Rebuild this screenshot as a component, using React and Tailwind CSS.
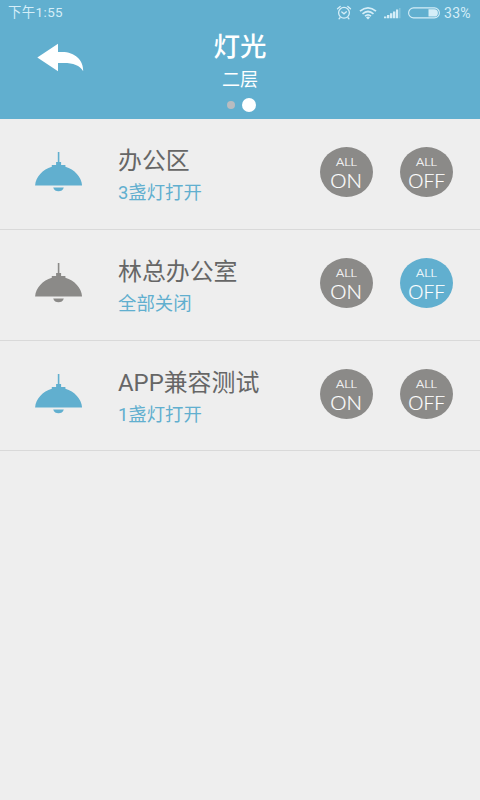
import React from "react";

const rooms = [
  { name: "办公区", status: "3盏灯打开", lit: true, off: false },
  { name: "林总办公室", status: "全部关闭", lit: false, off: true },
  { name: "APP兼容测试", status: "1盏灯打开", lit: true, off: false },
];

const StatusBar = () => (
  <div className="flex h-[26px] items-center justify-between pl-[8px] pr-[7px] text-[#d5eef8]">
    <span className="text-[13.4px] leading-[26px] tracking-[0.4px]">下午1:55</span>
    <div className="flex items-center">
      <svg width="16" height="16" viewBox="0 0 16 16" fill="none" stroke="currentColor" strokeWidth="1.3" strokeLinecap="round">
        <circle cx="8" cy="7.8" r="5.4" />
        <path d="M1.5 3.8 4.2 1.4M14.5 3.8 11.8 1.4M5.8 7 8 8.8 10.4 6.8M4 12.8 3.1 13.8M12 12.8 12.9 13.8" />
      </svg>
      <svg className="ml-[7px]" width="18" height="14" viewBox="0 0 18 14" fill="none" stroke="currentColor" strokeWidth="1.7">
        <path d="M1 5.2Q9-1.6 17 5.2M3.5 7.8Q9 3.2 14.5 7.8M6 10.2Q9 7.6 12 10.2" />
        <path d="M7 11.4Q9 9.8 11 11.4L9 13.4Z" fill="currentColor" stroke="none" />
      </svg>
      <svg className="ml-[7px]" width="17" height="12" viewBox="0 0 17 12" fill="currentColor">
        <path d="M0 9.5h2.4v1.8H0zM3 8h2.4v3.3H3zM6 6.3h2.4v5H6zM9 4.5h2.4v6.8H9zM12 2.5h2.2v8.8H12z" />
        <path d="M15 1h1.5v10.3H15z" opacity=".3" />
      </svg>
      <svg className="ml-[7px]" width="32" height="12" viewBox="0 0 32 12">
        <rect x=".6" y=".9" width="30.8" height="10" rx="5" fill="none" stroke="currentColor" strokeWidth="1.1" />
        <path d="M20.5 2.2h5.7a3.7 3.7 0 0 1 0 7.4h-5.7z" fill="currentColor" />
      </svg>
      <span className="ml-[4px] w-[29px] whitespace-nowrap text-[14px] leading-[26px] tracking-[0.3px]">33%</span>
    </div>
  </div>
);

const Header = () => (
  <header className="h-[119px] bg-[#61afcf] text-white">
    <StatusBar />
    <div className="grid h-[93px] grid-cols-[1fr_120px_1fr]">
      <button className="ml-[37px] mt-[17px] h-[29px] w-[47px]" aria-label="back">
        <svg width="47" height="29" viewBox="0 0 47 29" fill="currentColor">
          <path d="M.3 14.5 21 .8V9H25C38 9 46.5 17 46.2 28.3 43 22.5 36 20 27 20H21V28.2Z" />
        </svg>
      </button>
      <div className="flex flex-col items-center">
        <h1 className="mt-[2px] text-[26.5px] font-medium leading-[38px]">灯光</h1>
        <p className="text-[18px] leading-[27px]">二层</p>
        <div className="ml-[2px] mt-[5px] flex items-center gap-[7px]">
          <span className="size-[8px] rounded-full bg-[#b9bcc0]" />
          <span className="size-[14px] rounded-full bg-white" />
        </div>
      </div>
    </div>
  </header>
);

const Lamp = ({ lit }) => (
  <svg
    width="48"
    height="40"
    viewBox="0 0 48 40"
    className={lit ? "text-[#61afcf]" : "text-[#8b8a88]"}
    fill="currentColor"
  >
    <path d="M22.8 0h1.6v10h1.7v3h4.3v1.8C39.5 17.5 46.5 25 47.1 33.4H.1C.7 25 7.7 17.5 16.8 14.8V13h4.3v-3h1.7z" />
    <path d="M18.2 35.4h10.6C28 38 26 39.2 23.5 39.2S19 38 18.2 35.4z" />
  </svg>
);

const AllButton = ({ label, active }) => (
  <button
    className={`flex h-[50px] w-[53px] flex-col items-center rounded-[50%] font-['Lato','Noto_Sans',sans-serif] text-white ${
      active ? "bg-[#61afcf]" : "bg-[#8b8a88]"
    }`}
  >
    <span className="mt-[6px] text-[12.5px] font-light leading-[17px] [-webkit-text-stroke:0.2px_white]">ALL</span>
    <span className={`text-[19.5px] font-light leading-[21px] [-webkit-text-stroke:0.2px_white] ${label === "OFF" ? "scale-x-[0.98]" : "scale-x-[1.05]"}`}>
      {label}
    </span>
  </button>
);

const App = () => {
  return (
    <div className="h-[800px] w-[480px] overflow-hidden bg-[#eeeeee] font-['Roboto','Noto_Sans_CJK_SC',sans-serif]">
      <Header />
      {rooms.map((room, index) => (
        <div key={index} className="flex h-[110.8px] border-b border-[#d9d9d9]">
          <div className="ml-[35px] mt-[33px] w-[83px]">
            <Lamp lit={room.lit} />
          </div>
          <div className="w-[202px] pt-[25px]">
            <h2 className="text-[23.9px] leading-[34px] text-[#666666]">{room.name}</h2>
            <p className="mt-px text-[18.4px] leading-[27px] text-[#61afcf]">{room.status}</p>
          </div>
          <div className="flex gap-[27px] pt-[28px]">
            <AllButton label="ON" />
            <AllButton label="OFF" active={room.off} />
          </div>
        </div>
      ))}
    </div>
  );
};

export default App;
